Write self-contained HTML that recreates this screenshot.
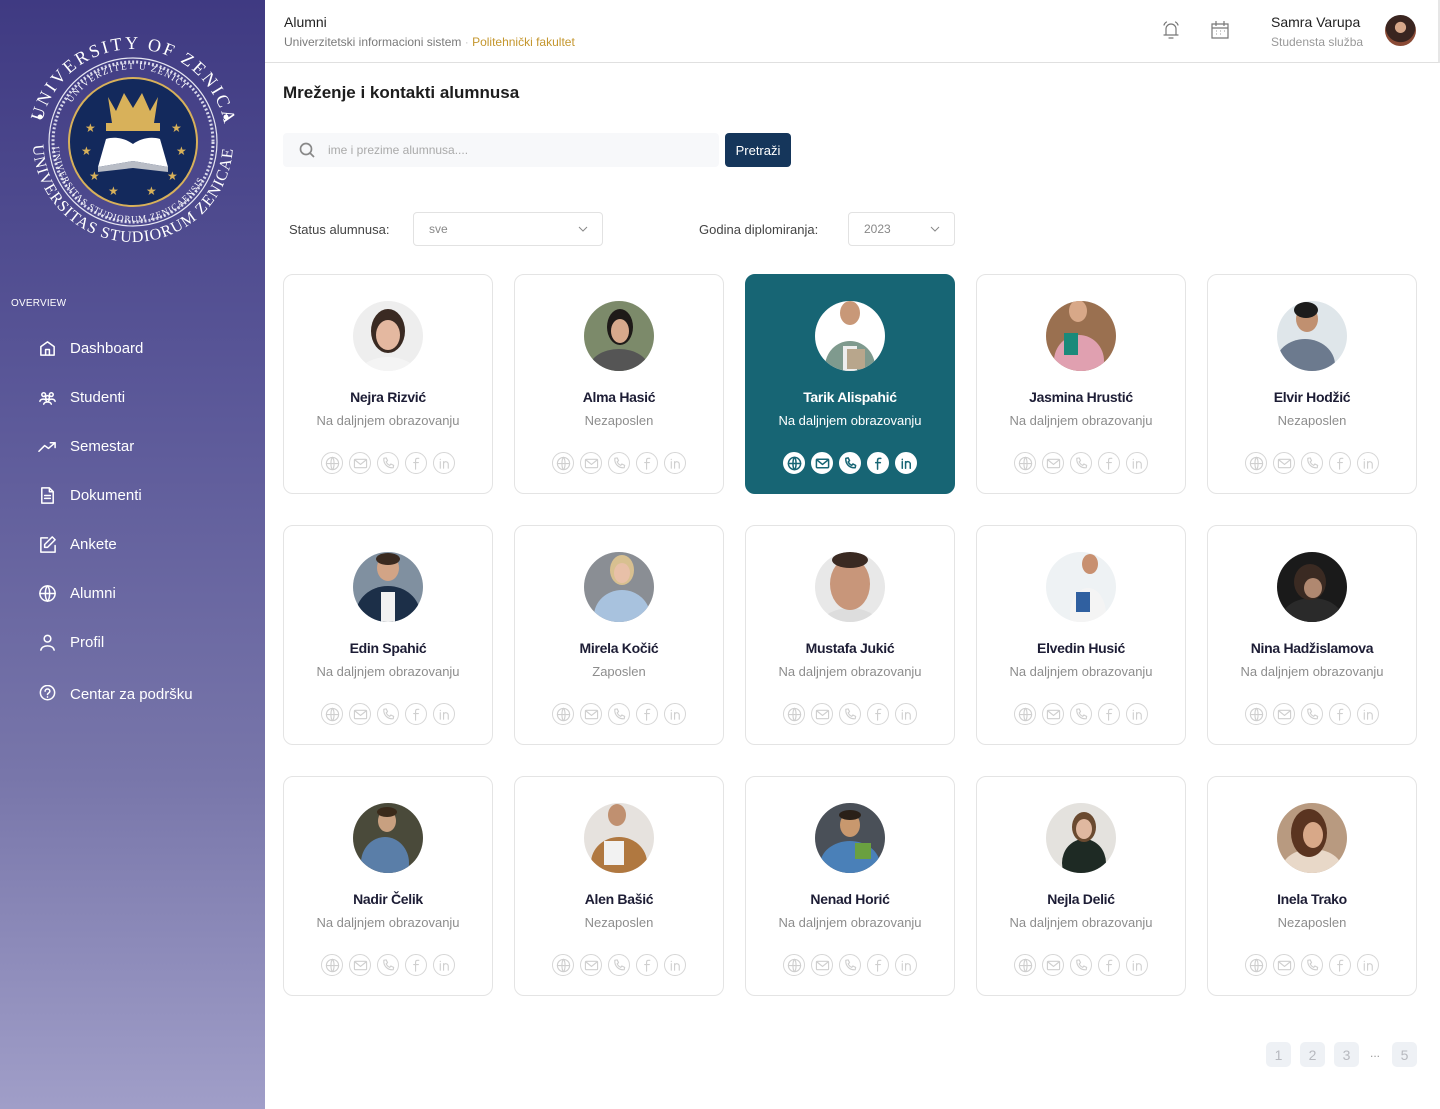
<!DOCTYPE html>
<html><head><meta charset="utf-8">
<style>
*{box-sizing:border-box;margin:0;padding:0}
body{width:1440px;height:1109px;overflow:hidden;background:#fff;font-family:"Liberation Sans",sans-serif;position:relative}
.side{position:absolute;left:0;top:0;width:265px;height:1109px;background:linear-gradient(180deg,#3f3a82 0%,#5a5798 35%,#7876aa 70%,#a09ec8 100%)}
.ov{position:absolute;left:11px;top:298px;font-size:10px;color:#fff;letter-spacing:.2px}
.nav{position:absolute;left:38px;color:#fff;font-size:15px;display:flex;align-items:center;gap:13px}
.nav svg{width:19px;height:19px;fill:none;stroke:#fff;stroke-width:1.6;stroke-linecap:round;stroke-linejoin:round}
.top{position:absolute;left:265px;top:0;width:1175px;height:63px;border-bottom:1px solid #e0e0e0;border-right:2px solid #e6e6e6}
.card{position:absolute;width:210px;height:220px;border:1px solid #e4e4e4;border-radius:10px;background:#fff;text-align:center}
.card .av{position:absolute;left:69px;top:26px;width:70px;height:70px;border-radius:50%;overflow:hidden}
.card .nm{position:absolute;left:0;right:0;top:114px;font-size:14px;font-weight:bold;color:#1d1d35;letter-spacing:-.3px}
.card .st{position:absolute;left:0;right:0;top:138px;font-size:13px;color:#8d8d8d}
.card .ic{position:absolute;left:37px;top:177px;display:flex;gap:6px}
.ic span{width:22px;height:22px;border:1px solid #d6d6d6;border-radius:50%;display:flex;align-items:center;justify-content:center}
.ic svg{width:15px;height:15px;fill:none;stroke:#cfcfcf;stroke-width:1.2;stroke-linecap:round;stroke-linejoin:round}
.card.act{background:#176574;border-color:#176574}
.act .nm,.act .st{color:#fff}
.act .ic span{background:#fff;border-color:#fff}
.act .ic svg{stroke:#176574;stroke-width:1.6}
.pg{position:absolute;top:1042px;width:25px;height:25px;border-radius:5px;background:#eef1f5;color:#b7b9bf;font-size:14px;display:flex;align-items:center;justify-content:center}
</style></head><body>
<svg width="0" height="0" style="position:absolute">
<defs>
<symbol id="gl" viewBox="0 0 16 16"><circle cx="8" cy="8" r="6.5"/><path d="M1.5 8h13M8 1.5c2.2 2 2.2 11 0 13M8 1.5c-2.2 2-2.2 11 0 13"/></symbol>
<symbol id="ml" viewBox="0 0 16 16"><rect x="1.5" y="3.5" width="13" height="9" rx="1"/><path d="M1.8 4l6.2 5 6.2-5"/></symbol>
<symbol id="ph" viewBox="0 0 16 16"><path d="M3 2.5l2.5-.5 1.5 3-1.5 1.2c.8 1.8 2 3 3.8 3.8L10.5 8.5l3 1.5-.5 2.5c-6 .5-10.5-4-10-10z"/></symbol>
<symbol id="fb" viewBox="0 0 16 16"><path d="M10.5 2.5H9c-1.4 0-2 .8-2 2V14M5 7h5"/></symbol>
<symbol id="li" viewBox="0 0 16 16"><path d="M3.5 6v7M3.5 3.5v.3M7 13V6M7 8.5c0-1.5 1-2.5 2.3-2.5S12 7 12 8.5V13"/></symbol>
</defs></svg>

<div class="side">
<svg style="position:absolute;left:28px;top:37px" width="210" height="210" viewBox="0 0 210 210">
<defs><path id="c1" d="M105 105 m-93 0 a93 93 0 1 1 186 0"/><path id="c2" d="M105 105 m-100 0 a100 100 0 0 0 200 0"/>
<path id="c3" d="M105 105 m-73 0 a73 73 0 1 1 146 0"/><path id="c4" d="M105 105 m-80 0 a80 80 0 0 0 160 0"/></defs>
<circle cx="105" cy="105" r="84" fill="none" stroke="#e6e6f2" stroke-width="1.2"/>
<circle cx="105" cy="105" r="80" fill="none" stroke="#d8d8ea" stroke-width="3" stroke-dasharray="2 2"/>
<circle cx="105" cy="105" r="64" fill="#13295c" stroke="#d8b15a" stroke-width="2"/>
<text font-family="Liberation Serif,serif" font-size="18" fill="#fff" letter-spacing="2.5"><textPath href="#c1" startOffset="7%">UNIVERSITY OF ZENICA</textPath></text>
<text font-family="Liberation Serif,serif" font-size="16" fill="#fff" letter-spacing="1"><textPath href="#c2" startOffset="1%">UNIVERSITAS STUDIORUM ZENICAENSIS</textPath></text>
<text font-family="Liberation Serif,serif" font-size="9" fill="#fff" letter-spacing="1.5"><textPath href="#c3" startOffset="18%">UNIVERZITET U ZENICI</textPath></text>
<text font-family="Liberation Serif,serif" font-size="9" fill="#fff" letter-spacing="1"><textPath href="#c4" startOffset="2%">UNIVERSITAS STUDIORUM ZENICAENSIS</textPath></text>
<circle cx="12" cy="80" r="2.5" fill="#fff"/><circle cx="198" cy="80" r="2.5" fill="#fff"/>
<path d="M80 60l8 14 8-18 9 15 9-15 8 18 8-14-4 26h-42z" fill="#d8b15a"/>
<rect x="78" y="86" width="54" height="8" fill="#d8b15a"/>
<path d="M70 130l35-6 35 6-8-28c-10-3-20 0-27 5-7-5-17-8-27-5z" fill="#fff"/>
<path d="M70 130l35-6 35 6v5l-35-4-35 4z" fill="#b9bdc6"/>
<g fill="#d8b15a" font-size="12" font-family="DejaVu Sans"><text x="57" y="95">★</text><text x="143" y="95">★</text><text x="53" y="118">★</text><text x="148" y="118">★</text><text x="61" y="143">★</text><text x="139" y="143">★</text><text x="80" y="158">★</text><text x="118" y="158">★</text></g>
</svg>
<div class="ov">OVERVIEW</div>
<div class="nav" style="top:339px"><svg viewBox="0 0 20 20"><path d="M3 17V8l7-5 7 5v9zM8 17v-6h4v6"/></svg>Dashboard</div>
<div class="nav" style="top:388px"><svg viewBox="0 0 20 20"><circle cx="6" cy="7" r="2"/><circle cx="14" cy="7" r="2"/><circle cx="10" cy="10" r="2"/><path d="M2 14c1-3 6-3 7 0M11 14c1-3 6-3 7 0M6 17c1-3 7-3 8 0"/></svg>Studenti</div>
<div class="nav" style="top:437px"><svg viewBox="0 0 20 20"><path d="M1 15l6-6 4 3 7-6M13 6h5v5"/></svg>Semestar</div>
<div class="nav" style="top:486px"><svg viewBox="0 0 20 20"><path d="M4 2h8l4 4v12H4zM12 2v4h4M7 10h6M7 13h6"/></svg>Dokumenti</div>
<div class="nav" style="top:535px"><svg viewBox="0 0 20 20"><path d="M10 3H3v15h15v-7M15 2l3 3-8 8H7v-3z"/></svg>Ankete</div>
<div class="nav" style="top:584px"><svg viewBox="0 0 20 20"><circle cx="10" cy="10" r="8"/><path d="M2 10h16M10 2c3 3 3 13 0 16M10 2c-3 3-3 13 0 16"/></svg>Alumni</div>
<div class="nav" style="top:633px"><svg viewBox="0 0 20 20"><circle cx="10" cy="6" r="3.5"/><path d="M3 18c1-6 13-6 14 0"/></svg>Profil</div>
<div class="nav" style="top:685px"><svg viewBox="0 0 20 20"><circle cx="10" cy="8" r="7.5"/><path d="M7.5 6.5c0-3 5-3 5 0 0 2-2.5 2-2.5 3.5M10 12.5v.3"/></svg>Centar za podršku</div>
</div>

<div class="top">
<div style="position:absolute;left:19px;top:14px;font-size:14px;color:#222">Alumni</div>
<div style="position:absolute;left:19px;top:35px;font-size:12px;color:#7a7a7a">Univerzitetski informacioni sistem <span style="color:#ccc">·</span> <span style="color:#c4962d">Politehnički fakultet</span></div>
<svg style="position:absolute;left:895px;top:19px" width="22" height="22" viewBox="0 0 22 22" fill="none" stroke="#777" stroke-width="1.2" stroke-linecap="round"><path d="M6 16V10a5 5 0 0 1 10 0v6zM4 16h14M9 19h4M4 6c.5-1.5 1.5-2.5 2.5-3M18 6c-.5-1.5-1.5-2.5-2.5-3"/></svg>
<svg style="position:absolute;left:944px;top:19px" width="22" height="22" viewBox="0 0 22 22" fill="none" stroke="#777" stroke-width="1.2"><path d="M3 5h16v14H3zM3 9h16M7 2v5M15 2v5"/><path d="M7 12h.5M11 12h.5M15 12h.5M7 15h.5M11 15h.5" stroke-width="1.6"/></svg>
<div style="position:absolute;left:1006px;top:14px;font-size:14px;color:#222">Samra Varupa</div>
<div style="position:absolute;left:1006px;top:35px;font-size:12px;color:#999">Studensta služba</div>
<div style="position:absolute;left:1120px;top:15px;width:31px;height:31px;border-radius:50%;background:radial-gradient(circle at 50% 40%,#d8a88a 0 22%,#3a2520 24% 60%,#8a4a35 62%)"></div>
</div>

<div style="position:absolute;left:283px;top:83px;font-size:17px;font-weight:bold;color:#1d1d1d">Mreženje i kontakti alumnusa</div>
<div style="position:absolute;left:283px;top:133px;width:436px;height:34px;background:#f7f8fa;border-radius:4px"></div>
<svg style="position:absolute;left:298px;top:141px" width="18" height="18" viewBox="0 0 18 18" fill="none" stroke="#888" stroke-width="1.7"><circle cx="8" cy="8" r="5.5"/><path d="M12 12l4 4"/></svg>
<div style="position:absolute;left:328px;top:143px;font-size:12px;color:#aaa">ime i prezime alumnusa....</div>
<div style="position:absolute;left:725px;top:133px;width:66px;height:34px;background:#15365b;border-radius:4px;color:#fff;font-size:13px;display:flex;align-items:center;justify-content:center">Pretraži</div>
<div style="position:absolute;left:289px;top:222px;font-size:13px;color:#444">Status alumnusa:</div>
<div style="position:absolute;left:413px;top:212px;width:190px;height:34px;border:1px solid #e2e2e2;border-radius:4px"><span style="position:absolute;left:15px;top:9px;font-size:12px;color:#888">sve</span><svg style="position:absolute;right:14px;top:12px" width="10" height="8" viewBox="0 0 10 8" fill="none" stroke="#888"><path d="M1 2l4 4 4-4"/></svg></div>
<div style="position:absolute;left:699px;top:222px;font-size:13px;color:#444">Godina diplomiranja:</div>
<div style="position:absolute;left:848px;top:212px;width:107px;height:34px;border:1px solid #e2e2e2;border-radius:4px"><span style="position:absolute;left:15px;top:9px;font-size:12px;color:#888">2023</span><svg style="position:absolute;right:14px;top:12px" width="10" height="8" viewBox="0 0 10 8" fill="none" stroke="#888"><path d="M1 2l4 4 4-4"/></svg></div>

<!-- row 1 -->
<div class="card" style="left:283px;top:274px"><div class="av"><svg width="70" height="70"><rect width="70" height="70" fill="#eee"/><ellipse cx="35" cy="72" rx="28" ry="16" fill="#f4f4f4"/><ellipse cx="35" cy="30" rx="17" ry="22" fill="#3a2a22"/><ellipse cx="35" cy="34" rx="12" ry="15" fill="#e4b8a0"/></svg></div><div class="nm">Nejra Rizvić</div><div class="st">Na daljnjem obrazovanju</div><div class="ic"><span><svg><use href="#gl"/></svg></span><span><svg><use href="#ml"/></svg></span><span><svg><use href="#ph"/></svg></span><span><svg><use href="#fb"/></svg></span><span><svg><use href="#li"/></svg></span></div></div>
<div class="card" style="left:514px;top:274px"><div class="av"><svg width="70" height="70"><rect width="70" height="70" fill="#7c8a6a"/><ellipse cx="35" cy="68" rx="30" ry="20" fill="#555"/><ellipse cx="36" cy="26" rx="13" ry="18" fill="#1e1a18"/><ellipse cx="36" cy="30" rx="9" ry="12" fill="#d7a98c"/></svg></div><div class="nm">Alma Hasić</div><div class="st">Nezaposlen</div><div class="ic"><span><svg><use href="#gl"/></svg></span><span><svg><use href="#ml"/></svg></span><span><svg><use href="#ph"/></svg></span><span><svg><use href="#fb"/></svg></span><span><svg><use href="#li"/></svg></span></div></div>
<div class="card act" style="left:745px;top:274px"><div class="av"><svg width="70" height="70"><rect width="70" height="70" fill="#fff"/><ellipse cx="35" cy="66" rx="25" ry="26" fill="#7f9a8e"/><rect x="28" y="45" width="14" height="25" fill="#eee"/><rect x="32" y="48" width="18" height="20" fill="#b8a68c"/><ellipse cx="35" cy="12" rx="10" ry="12" fill="#c89878"/></svg></div><div class="nm">Tarik Alispahić</div><div class="st">Na daljnjem obrazovanju</div><div class="ic"><span><svg><use href="#gl"/></svg></span><span><svg><use href="#ml"/></svg></span><span><svg><use href="#ph"/></svg></span><span><svg><use href="#fb"/></svg></span><span><svg><use href="#li"/></svg></span></div></div>
<div class="card" style="left:976px;top:274px"><div class="av"><svg width="70" height="70"><rect width="70" height="70" fill="#9a7050"/><ellipse cx="33" cy="60" rx="25" ry="26" fill="#e0a0b0"/><rect x="18" y="32" width="14" height="22" fill="#1a8a7a"/><ellipse cx="32" cy="10" rx="9" ry="11" fill="#d8a888"/></svg></div><div class="nm">Jasmina Hrustić</div><div class="st">Na daljnjem obrazovanju</div><div class="ic"><span><svg><use href="#gl"/></svg></span><span><svg><use href="#ml"/></svg></span><span><svg><use href="#ph"/></svg></span><span><svg><use href="#fb"/></svg></span><span><svg><use href="#li"/></svg></span></div></div>
<div class="card" style="left:1207px;top:274px"><div class="av"><svg width="70" height="70"><rect width="70" height="70" fill="#dfe6ea"/><ellipse cx="28" cy="64" rx="30" ry="26" fill="#6c7a8e"/><ellipse cx="30" cy="18" rx="11" ry="13" fill="#c09070"/><ellipse cx="29" cy="9" rx="12" ry="8" fill="#1c1c1c"/></svg></div><div class="nm">Elvir Hodžić</div><div class="st">Nezaposlen</div><div class="ic"><span><svg><use href="#gl"/></svg></span><span><svg><use href="#ml"/></svg></span><span><svg><use href="#ph"/></svg></span><span><svg><use href="#fb"/></svg></span><span><svg><use href="#li"/></svg></span></div></div>
<!-- row 2 -->
<div class="card" style="left:283px;top:525px"><div class="av"><svg width="70" height="70"><rect width="70" height="70" fill="#8090a0"/><ellipse cx="35" cy="62" rx="32" ry="28" fill="#1c2f48"/><rect x="28" y="40" width="14" height="30" fill="#f2f2f2"/><ellipse cx="35" cy="16" rx="11" ry="13" fill="#d2a486"/><ellipse cx="35" cy="7" rx="12" ry="6" fill="#3a2a20"/></svg></div><div class="nm">Edin Spahić</div><div class="st">Na daljnjem obrazovanju</div><div class="ic"><span><svg><use href="#gl"/></svg></span><span><svg><use href="#ml"/></svg></span><span><svg><use href="#ph"/></svg></span><span><svg><use href="#fb"/></svg></span><span><svg><use href="#li"/></svg></span></div></div>
<div class="card" style="left:514px;top:525px"><div class="av"><svg width="70" height="70"><rect width="70" height="70" fill="#8a8e94"/><ellipse cx="38" cy="64" rx="28" ry="26" fill="#a8c2de"/><ellipse cx="38" cy="18" rx="12" ry="15" fill="#d8c090"/><ellipse cx="38" cy="21" rx="8" ry="10" fill="#e8c0a8"/></svg></div><div class="nm">Mirela Kočić</div><div class="st">Zaposlen</div><div class="ic"><span><svg><use href="#gl"/></svg></span><span><svg><use href="#ml"/></svg></span><span><svg><use href="#ph"/></svg></span><span><svg><use href="#fb"/></svg></span><span><svg><use href="#li"/></svg></span></div></div>
<div class="card" style="left:745px;top:525px"><div class="av"><svg width="70" height="70"><rect width="70" height="70" fill="#e8e8e8"/><ellipse cx="35" cy="72" rx="28" ry="16" fill="#ddd"/><ellipse cx="35" cy="32" rx="20" ry="26" fill="#c8967a"/><ellipse cx="35" cy="8" rx="18" ry="8" fill="#3a2a22"/></svg></div><div class="nm">Mustafa Jukić</div><div class="st">Na daljnjem obrazovanju</div><div class="ic"><span><svg><use href="#gl"/></svg></span><span><svg><use href="#ml"/></svg></span><span><svg><use href="#ph"/></svg></span><span><svg><use href="#fb"/></svg></span><span><svg><use href="#li"/></svg></span></div></div>
<div class="card" style="left:976px;top:525px"><div class="av"><svg width="70" height="70"><rect width="70" height="70" fill="#eef2f4"/><ellipse cx="42" cy="62" rx="18" ry="26" fill="#f4f4f4"/><rect x="30" y="40" width="14" height="20" fill="#3060a0"/><ellipse cx="44" cy="12" rx="8" ry="10" fill="#c89070"/></svg></div><div class="nm">Elvedin Husić</div><div class="st">Na daljnjem obrazovanju</div><div class="ic"><span><svg><use href="#gl"/></svg></span><span><svg><use href="#ml"/></svg></span><span><svg><use href="#ph"/></svg></span><span><svg><use href="#fb"/></svg></span><span><svg><use href="#li"/></svg></span></div></div>
<div class="card" style="left:1207px;top:525px"><div class="av"><svg width="70" height="70"><rect width="70" height="70" fill="#1a1a1a"/><ellipse cx="35" cy="66" rx="30" ry="20" fill="#2a2a2a"/><ellipse cx="33" cy="30" rx="16" ry="18" fill="#3a2a22"/><ellipse cx="36" cy="36" rx="9" ry="10" fill="#b08870"/></svg></div><div class="nm">Nina Hadžislamova</div><div class="st">Na daljnjem obrazovanju</div><div class="ic"><span><svg><use href="#gl"/></svg></span><span><svg><use href="#ml"/></svg></span><span><svg><use href="#ph"/></svg></span><span><svg><use href="#fb"/></svg></span><span><svg><use href="#li"/></svg></span></div></div>
<!-- row 3 -->
<div class="card" style="left:283px;top:776px"><div class="av"><svg width="70" height="70"><rect width="70" height="70" fill="#4a4a3a"/><ellipse cx="32" cy="60" rx="24" ry="26" fill="#5a7ea8"/><ellipse cx="34" cy="18" rx="9" ry="11" fill="#c8a080"/><ellipse cx="34" cy="9" rx="10" ry="5" fill="#3a2a1a"/></svg></div><div class="nm">Nadir Čelik</div><div class="st">Na daljnjem obrazovanju</div><div class="ic"><span><svg><use href="#gl"/></svg></span><span><svg><use href="#ml"/></svg></span><span><svg><use href="#ph"/></svg></span><span><svg><use href="#fb"/></svg></span><span><svg><use href="#li"/></svg></span></div></div>
<div class="card" style="left:514px;top:776px"><div class="av"><svg width="70" height="70"><rect width="70" height="70" fill="#e6e2de"/><ellipse cx="35" cy="60" rx="28" ry="26" fill="#b07840"/><rect x="20" y="38" width="20" height="24" fill="#f2f2f2"/><ellipse cx="33" cy="12" rx="9" ry="11" fill="#c09070"/></svg></div><div class="nm">Alen Bašić</div><div class="st">Nezaposlen</div><div class="ic"><span><svg><use href="#gl"/></svg></span><span><svg><use href="#ml"/></svg></span><span><svg><use href="#ph"/></svg></span><span><svg><use href="#fb"/></svg></span><span><svg><use href="#li"/></svg></span></div></div>
<div class="card" style="left:745px;top:776px"><div class="av"><svg width="70" height="70"><rect width="70" height="70" fill="#4a5058"/><ellipse cx="35" cy="62" rx="30" ry="24" fill="#4a80b8"/><rect x="40" y="40" width="16" height="16" fill="#6aa040"/><ellipse cx="35" cy="22" rx="10" ry="12" fill="#c8986e"/><ellipse cx="35" cy="12" rx="11" ry="5" fill="#2a2018"/></svg></div><div class="nm">Nenad Horić</div><div class="st">Na daljnjem obrazovanju</div><div class="ic"><span><svg><use href="#gl"/></svg></span><span><svg><use href="#ml"/></svg></span><span><svg><use href="#ph"/></svg></span><span><svg><use href="#fb"/></svg></span><span><svg><use href="#li"/></svg></span></div></div>
<div class="card" style="left:976px;top:776px"><div class="av"><svg width="70" height="70"><rect width="70" height="70" fill="#e4e2de"/><ellipse cx="38" cy="60" rx="22" ry="24" fill="#1e2a24"/><ellipse cx="38" cy="24" rx="12" ry="15" fill="#6a4a30"/><ellipse cx="38" cy="26" rx="8" ry="10" fill="#e0b8a0"/></svg></div><div class="nm">Nejla Delić</div><div class="st">Na daljnjem obrazovanju</div><div class="ic"><span><svg><use href="#gl"/></svg></span><span><svg><use href="#ml"/></svg></span><span><svg><use href="#ph"/></svg></span><span><svg><use href="#fb"/></svg></span><span><svg><use href="#li"/></svg></span></div></div>
<div class="card" style="left:1207px;top:776px"><div class="av"><svg width="70" height="70"><rect width="70" height="70" fill="#b89a80"/><ellipse cx="35" cy="66" rx="30" ry="20" fill="#e8d8c8"/><ellipse cx="32" cy="30" rx="18" ry="24" fill="#5a3420"/><ellipse cx="36" cy="32" rx="10" ry="13" fill="#d8a888"/></svg></div><div class="nm">Inela Trako</div><div class="st">Nezaposlen</div><div class="ic"><span><svg><use href="#gl"/></svg></span><span><svg><use href="#ml"/></svg></span><span><svg><use href="#ph"/></svg></span><span><svg><use href="#fb"/></svg></span><span><svg><use href="#li"/></svg></span></div></div>

<div class="pg" style="left:1266px">1</div>
<div class="pg" style="left:1300px">2</div>
<div class="pg" style="left:1334px">3</div>
<div style="position:absolute;left:1370px;top:1046px;font-size:12px;color:#999">...</div>
<div class="pg" style="left:1392px">5</div>
</body></html>
